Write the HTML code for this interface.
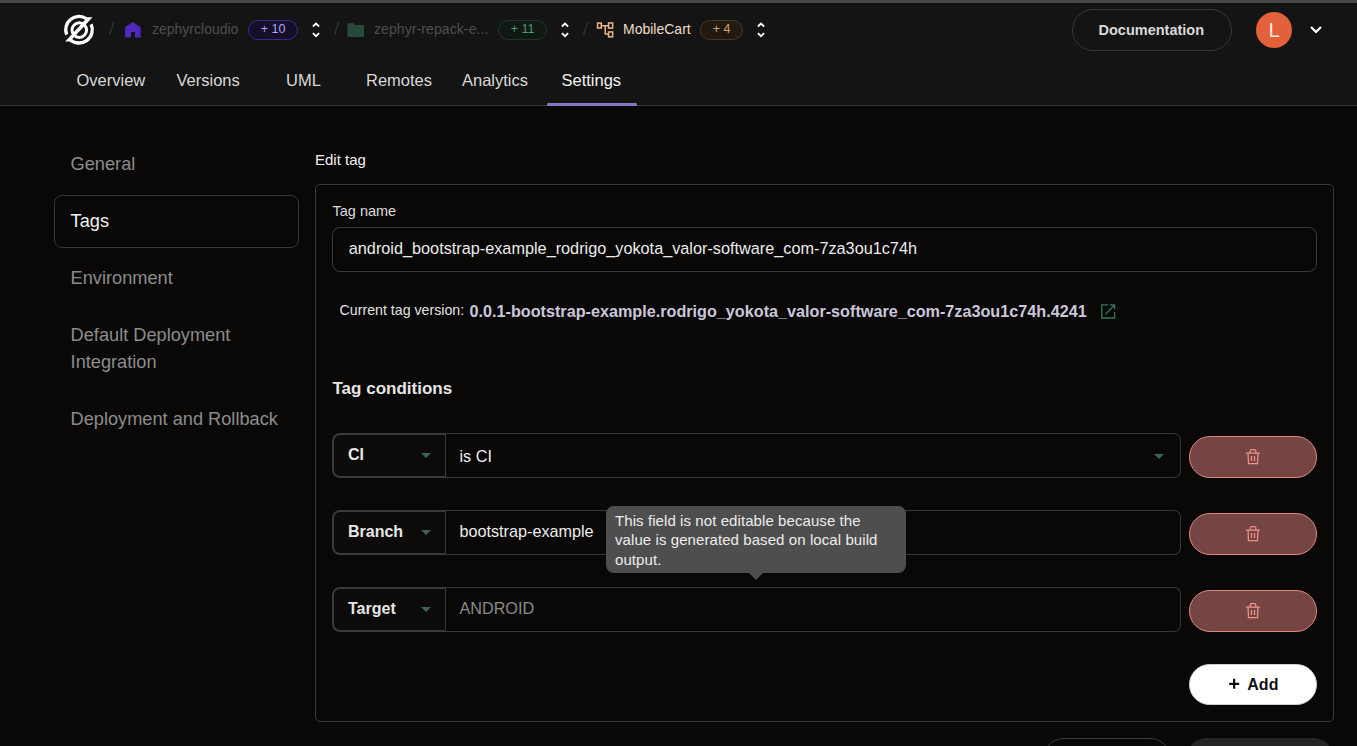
<!DOCTYPE html>
<html><head><meta charset="utf-8">
<style>
*{box-sizing:border-box;margin:0;padding:0}
html,body{width:1357px;height:746px;overflow:hidden;background:#090807;font-family:"Liberation Sans",sans-serif;color:#e8e8e8}
.a{position:absolute}
.t{position:absolute;white-space:nowrap;line-height:1}
#topbar{position:absolute;left:0;top:0;width:1357px;height:3px;background:#474747}
#header{position:absolute;left:0;top:3px;width:1357px;height:103px;background:#141414;border-bottom:1px solid #353535}
.tab{font-size:16.5px;color:#d8d8d8;top:72px}
.crumb{font-size:14px;top:22px}
.slash{font-size:15px;top:21.5px;color:#383838}
.badge{position:absolute;top:20px;height:20px;border-radius:10px;font-size:12.5px;line-height:16.6px;text-align:center;border:1px solid}
.side{font-size:18.2px;color:#8c8c8c;left:70.6px}
#card{position:absolute;left:315px;top:184px;width:1019px;height:538px;border:1px solid #393939;border-radius:5px}
.sel{position:absolute;left:332px;width:114px;height:45px;border:2px solid #3a3a3a;border-right:1px solid #3a3a3a;border-radius:8px 0 0 8px;background:#0c0b0a}
.val{position:absolute;left:445px;width:736px;height:45px;border:1px solid #363636;border-left:none;border-radius:0 7px 7px 0}
.del{position:absolute;left:1189px;width:128px;height:42px;border-radius:21px;background:#744543;border:1px solid #e08680}
.selt{font-size:16px;font-weight:700;color:#e6e6e6;left:348px}
.caret{position:absolute;left:421px;width:0;height:0;border-left:5px solid transparent;border-right:5px solid transparent;border-top:5px solid #386657}
.valt{font-size:16.2px;left:459.5px;color:#ececec}
</style></head><body>
<div id="topbar"></div>
<div id="header"></div>

<!-- logo -->
<svg class="a" style="left:59px;top:10px" width="40" height="40" viewBox="0 0 40 40">
  <g fill="none" stroke="#fff" stroke-width="3.3">
    <path d="M7.67 24.68 A13.3 13.3 0 0 1 27.63 8.81"/>
    <path d="M11.45 29.89 A13.3 13.3 0 0 0 32.15 14.29"/>
    <circle cx="20.3" cy="20.1" r="7.3" stroke-width="3"/>
  </g>
  <polygon points="28.5,7.2 33.5,7.2 11,31.6 6.2,31.6" fill="#fff"/>
</svg>

<!-- breadcrumbs -->
<svg class="a" style="left:108.0px;top:21px" width="8" height="16"><path d="M5.6 1.5 L1.6 14" stroke="#343434" stroke-width="1.2" fill="none"/></svg>
<svg class="a" style="left:124px;top:21px" width="18" height="18" viewBox="0 0 18 18">
  <path d="M1 6.3 L8.7 0.9 L16.6 6.3 L16.6 16.6 L11 16.6 L11 11 L7 11 L7 16.6 L1 16.6 Z" fill="#5128bd"/>
</svg>
<div class="t crumb" style="left:152px;color:#4e4e4e">zephyrcloudio</div>
<div class="badge" style="left:248px;width:50px;background:#150f2a;border-color:#3b2a86;color:#b3a3ee">+ 10</div>
<svg class="a" style="left:310px;top:21px" width="12" height="18" viewBox="0 0 12 18">
  <path d="M2.9 5.5 L6 2.5 L9.1 5.5 M2.9 12.2 L6 15.2 L9.1 12.2" fill="none" stroke="#fff" stroke-width="1.8"/>
</svg>

<svg class="a" style="left:333.0px;top:21px" width="8" height="16"><path d="M5.6 1.5 L1.6 14" stroke="#343434" stroke-width="1.2" fill="none"/></svg>
<svg class="a" style="left:346px;top:21px" width="20" height="18" viewBox="0 0 20 18">
  <path d="M1.5 2.3 L7.5 2.3 L9.3 4 L18 4 L18 16 L1.5 16 Z" fill="#274b3b"/>
</svg>
<div class="t crumb" style="left:374px;color:#4e4e4e;letter-spacing:0.09px">zephyr-repack-e...</div>
<div class="badge" style="left:498px;width:49px;background:#0f1813;border-color:#223528;color:#4b9a72">+ 11</div>
<svg class="a" style="left:559px;top:21px" width="12" height="18" viewBox="0 0 12 18">
  <path d="M2.9 5.5 L6 2.5 L9.1 5.5 M2.9 12.2 L6 15.2 L9.1 12.2" fill="none" stroke="#fff" stroke-width="1.8"/>
</svg>

<svg class="a" style="left:582.0px;top:21px" width="8" height="16"><path d="M5.6 1.5 L1.6 14" stroke="#343434" stroke-width="1.2" fill="none"/></svg>
<svg class="a" style="left:595px;top:20px" width="20" height="20" viewBox="0 0 20 20">
  <g fill="none" stroke="#eab68a" stroke-width="1.5">
    <rect x="2.55" y="3.05" width="3.7" height="5"/>
    <rect x="13.55" y="2.95" width="4.1" height="5.2"/>
    <rect x="13.55" y="11.95" width="4.1" height="4.9"/>
    <path d="M6.25 5.7 L13.55 5.7 M10.2 5.7 L10.2 14.1 L13.55 14.1"/>
  </g>
</svg>
<div class="t crumb" style="left:623px;color:#eedcc8">MobileCart</div>
<div class="badge" style="left:700px;width:43px;background:#22190f;border-color:#4a3624;color:#d9a271">+ 4</div>
<svg class="a" style="left:755px;top:21px" width="12" height="18" viewBox="0 0 12 18">
  <path d="M2.9 5.5 L6 2.5 L9.1 5.5 M2.9 12.2 L6 15.2 L9.1 12.2" fill="none" stroke="#fff" stroke-width="1.8"/>
</svg>

<!-- right header -->
<div class="a" style="left:1072px;top:9px;width:160px;height:42px;border:1px solid #363636;border-radius:21px"></div>
<div class="t" style="left:1098.5px;top:23px;font-size:14.5px;font-weight:700;color:#d9d9d9">Documentation</div>
<div class="a" style="left:1256px;top:12px;width:36px;height:36px;border-radius:18px;background:#e2603a"></div>
<div class="t" style="left:1268.5px;top:19.5px;font-size:20.5px;color:#fbe9e2">L</div>
<svg class="a" style="left:1308px;top:24px" width="16" height="12" viewBox="0 0 16 12">
  <path d="M3 3 L8 8 L13 3" fill="none" stroke="#fff" stroke-width="2.2"/>
</svg>

<!-- tabs -->
<div class="t tab" style="left:76.5px">Overview</div>
<div class="t tab" style="left:176.5px">Versions</div>
<div class="t tab" style="left:286px">UML</div>
<div class="t tab" style="left:366px">Remotes</div>
<div class="t tab" style="left:462px">Analytics</div>
<div class="t tab" style="left:561.5px;color:#f2f2f2">Settings</div>
<div class="a" style="left:547px;top:102.5px;width:90px;height:3px;background:#8677c4;border-radius:1px"></div>

<!-- sidebar -->
<div class="t side" style="top:155px">General</div>
<div class="a" style="left:54px;top:195px;width:245px;height:53px;border:1px solid #363636;border-radius:8px"></div>
<div class="t side" style="top:211.8px;color:#f2f2f2">Tags</div>
<div class="t side" style="top:268.9px">Environment</div>
<div class="t side" style="top:326.3px">Default Deployment</div>
<div class="t side" style="top:352.6px">Integration</div>
<div class="t side" style="top:410px">Deployment and Rollback</div>

<!-- main -->
<div class="t" style="left:315px;top:152.3px;font-size:15px;color:#f0f0f0">Edit tag</div>
<div id="card"></div>
<div class="t" style="left:332.5px;top:203.7px;font-size:14.5px;color:#dcdcdc">Tag name</div>
<div class="a" style="left:332px;top:227px;width:985px;height:45px;border:1px solid #3a3a3a;border-radius:8px"></div>
<div class="t" style="left:348.8px;top:240.3px;font-size:16.25px;color:#ececec">android_bootstrap-example_rodrigo_yokota_valor-software_com-7za3ou1c74h</div>

<div class="t" style="left:339.6px;top:303.3px;font-size:14.2px;color:#e2e2e2">Current tag version:</div>
<div class="t" style="left:469.5px;top:303px;font-size:16.2px;font-weight:700;color:#cbc6da">0.0.1-bootstrap-example.rodrigo_yokota_valor-software_com-7za3ou1c74h.4241</div>
<svg class="a" style="left:1098px;top:301px" width="20" height="20" viewBox="0 0 20 20">
  <g fill="none" stroke="#367459" stroke-width="1.35">
    <path d="M10.3 3.8 L3.8 3.8 L3.8 17 L16.6 17 L16.6 10.9"/>
    <path d="M7.5 13.3 L16.7 4.1 M12 3.8 L16.6 3.8 L16.6 8.2"/>
  </g>
</svg>

<div class="t" style="left:332.5px;top:379.7px;font-size:17px;font-weight:700;color:#e6e6e6">Tag conditions</div>

<!-- row 1 -->
<div class="val" style="top:433px"></div>
<div class="sel" style="top:433px"></div>
<div class="t selt" style="top:446.5px">CI</div>
<div class="caret" style="top:453px"></div>
<div class="t valt" style="top:448.3px">is CI</div>
<div class="caret" style="left:1154px;top:454px"></div>
<div class="del" style="top:436px"></div>

<!-- row 2 -->
<div class="val" style="top:510px"></div>
<div class="sel" style="top:510px"></div>
<div class="t selt" style="top:523.5px">Branch</div>
<div class="caret" style="top:530px"></div>
<div class="t valt" style="top:523.3px">bootstrap-example</div>
<div class="del" style="top:513px"></div>

<!-- row 3 -->
<div class="val" style="top:587px"></div>
<div class="sel" style="top:587px"></div>
<div class="t selt" style="top:600.5px">Target</div>
<div class="caret" style="top:607px"></div>
<div class="t valt" style="top:600.3px;color:#8a8a8a">ANDROID</div>
<div class="del" style="top:590px"></div>

<!-- trash icons -->
<svg class="a" style="left:1243px;top:446px" width="20" height="20" viewBox="0 0 20 20"><g fill="none" stroke="#f3928b" stroke-width="1.25"><path d="M2.8 7 L16.9 7 M7.2 7 L7.2 4.8 Q7.2 3.6 8.4 3.6 L11.6 3.6 Q12.8 3.6 12.8 4.8 L12.8 7 M5 7 L5.5 17.6 L14.5 17.6 L15 7 M8.5 10 L8.5 15 M11.5 10 L11.5 15"/></g></svg>
<svg class="a" style="left:1243px;top:523px" width="20" height="20" viewBox="0 0 20 20"><g fill="none" stroke="#f3928b" stroke-width="1.25"><path d="M2.8 7 L16.9 7 M7.2 7 L7.2 4.8 Q7.2 3.6 8.4 3.6 L11.6 3.6 Q12.8 3.6 12.8 4.8 L12.8 7 M5 7 L5.5 17.6 L14.5 17.6 L15 7 M8.5 10 L8.5 15 M11.5 10 L11.5 15"/></g></svg>
<svg class="a" style="left:1243px;top:600px" width="20" height="20" viewBox="0 0 20 20"><g fill="none" stroke="#f3928b" stroke-width="1.25"><path d="M2.8 7 L16.9 7 M7.2 7 L7.2 4.8 Q7.2 3.6 8.4 3.6 L11.6 3.6 Q12.8 3.6 12.8 4.8 L12.8 7 M5 7 L5.5 17.6 L14.5 17.6 L15 7 M8.5 10 L8.5 15 M11.5 10 L11.5 15"/></g></svg>

<!-- tooltip -->
<div class="a" style="left:606px;top:506px;width:300px;height:67px;background:#4e4e4e;border-radius:8px"></div>
<div class="a" style="left:748.5px;top:572.5px;width:0;height:0;border-left:7.5px solid transparent;border-right:7.5px solid transparent;border-top:7.5px solid #4e4e4e"></div>
<div class="a" style="left:615px;top:510.5px;font-size:15px;line-height:19.7px;color:#ececec;letter-spacing:0.08px;white-space:nowrap">This field is not editable because the<br>value is generated based on local build<br>output.</div>

<!-- add button -->
<div class="a" style="left:1189px;top:664px;width:128px;height:41px;border-radius:21px;background:#fff;border:1px solid #d0d0d0"></div>
<svg class="a" style="left:1226px;top:676px" width="16" height="16" viewBox="0 0 16 16"><path d="M8.15 2.85 L8.15 12.85 M3.15 7.85 L13.15 7.85" stroke="#111" stroke-width="2.2"/></svg>
<div class="t" style="left:1247.3px;top:676.5px;font-size:16px;font-weight:700;color:#111">Add</div>

<!-- bottom buttons -->
<div class="a" style="left:1043px;top:738px;width:128px;height:42px;border:1px solid #3a3a3a;border-radius:21px"></div>
<div class="a" style="left:1186px;top:737.5px;width:148px;height:42px;background:#242424;border-radius:21px"></div>
</body></html>
